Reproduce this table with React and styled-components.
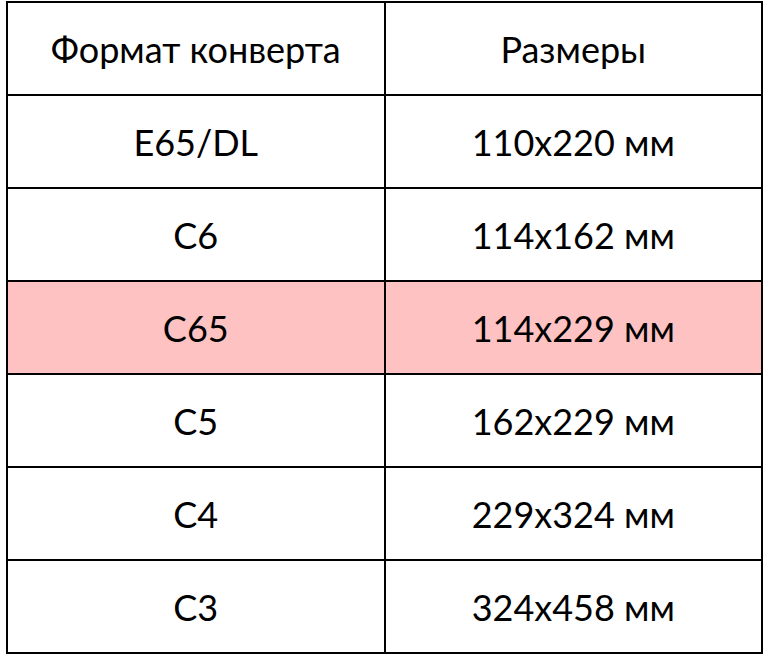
import React from 'react'
import styled, { createGlobalStyle } from 'styled-components'

const GlobalStyle = createGlobalStyle`
  html, body {
    margin: 0;
    padding: 0;
    background: #fff;
  }
  body {
    font-family: Lato, "Open Sans", "Liberation Sans", sans-serif;
  }
`

const Page = styled.div`
  padding: 1px 0 0 6px;
`

const Table = styled.table`
  width: 757px;
  border-collapse: collapse;
  table-layout: fixed;
  color: #000;
`

const Row = styled.tr`
  height: 93px;
  background: ${(p) => (p.$highlight ? '#ffc2c2' : '#fff')};
`

const Cell = styled.td`
  border: 2px solid #000;
  text-align: center;
  vertical-align: middle;
  font-size: 36px;
  font-weight: 400;
  padding: 0;
`

const rows = [
  { format: 'E65/DL', size: '110x220 мм' },
  { format: 'C6', size: '114x162 мм' },
  { format: 'C65', size: '114x229 мм', highlight: true },
  { format: 'C5', size: '162x229 мм' },
  { format: 'C4', size: '229x324 мм' },
  { format: 'C3', size: '324x458 мм' },
]

export default function App() {
  return (
    <Page>
      <GlobalStyle />
      <Table>
        <tbody>
          <Row>
            <Cell>Формат конверта</Cell>
            <Cell>Размеры</Cell>
          </Row>
          {rows.map((r) => (
            <Row key={r.format} $highlight={r.highlight}>
              <Cell>{r.format}</Cell>
              <Cell>{r.size}</Cell>
            </Row>
          ))}
        </tbody>
      </Table>
    </Page>
  )
}
